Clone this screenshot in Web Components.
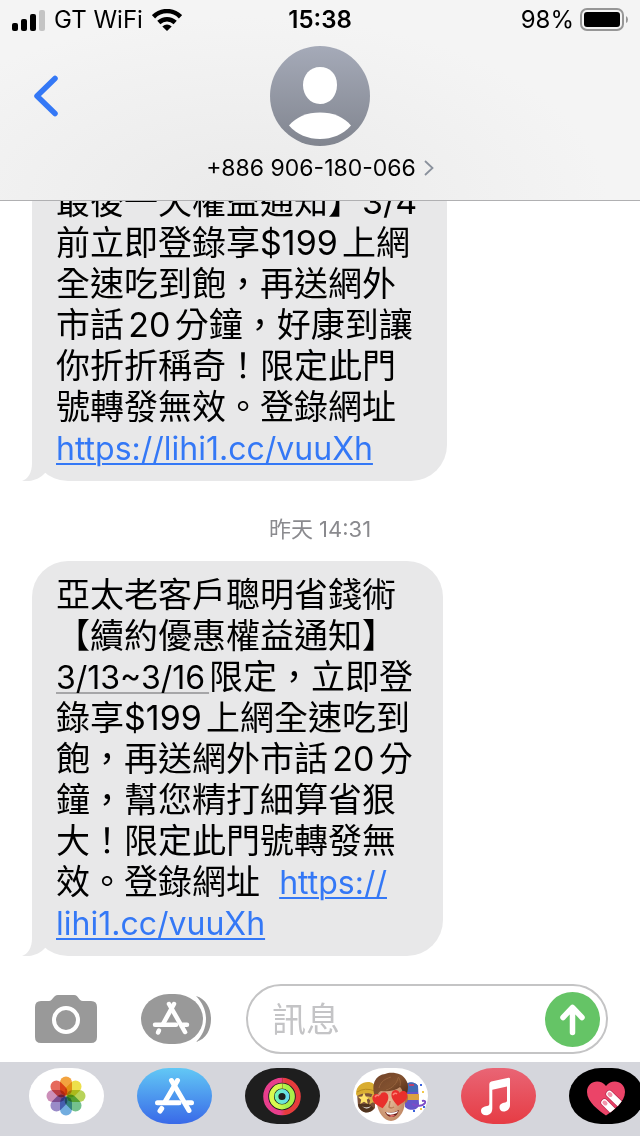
<!DOCTYPE html>
<html lang="zh-Hant">
<head>
<meta charset="utf-8">
<meta name="viewport" content="width=device-width, initial-scale=1">
<title>+886 906-180-066</title>
<style>
  html, body {
    margin: 0;
    height: 100%;
  }
  body {
    font-family: Inter, "Noto Sans CJK TC", sans-serif;
    color: #000;
    background: #fff;
  }
</style>
</head>
<body>
<message-app></message-app>

<script>
const define = (name, html) => {
  const template = document.createElement('template')
  template.innerHTML = html

  customElements.define(name, class extends HTMLElement {
    constructor() {
      super()
      this.attachShadow({ mode: 'open' })
      this.shadowRoot.appendChild(template.content.cloneNode(true))
    }
  })
}

define('status-bar', `
<style>
  :host {
    display: grid;
    grid-template-columns: 1fr auto 1fr;
    align-items: center;
    height: 40px;
    padding: 0 12px;
    font-size: 24px;
    line-height: 28px;
  }
  div {
    display: flex;
    align-items: center;
    gap: 9px;
  }
  .right {
    justify-content: flex-end;
    gap: 6px;
  }
  time { font-weight: 600; }
  svg { display: block; flex: none; }
</style>
<div>
  <svg width="33" height="21" viewBox="0 0 33 21" aria-hidden="true">
    <rect y="13" width="6" height="8" rx="2"/>
    <rect x="9" y="9" width="6" height="12" rx="2"/>
    <rect x="18" y="4" width="6" height="17" rx="2"/>
    <rect x="27" width="6" height="21" rx="2" fill="#c4c4c4"/>
  </svg>
  <span>GT WiFi</span>
  <svg width="30" height="22" viewBox="0 0 30 22" aria-hidden="true">
    <g fill="none" stroke="#000" stroke-width="4.500">
      <path d="M1.500 7.800C9 .2 21 .2 28.500 7.800"/>
      <path d="M6.800 13.500C11.500 9 18.500 9 23.200 13.500"/>
    </g>
    <path d="M15 22 10.300 17.500Q15 13.500 19.700 17.500Z"/>
  </svg>
</div>
<time>15:38</time>
<div class="right">
  <span>98%</span>
  <svg width="48" height="24" viewBox="0 0 48 24" aria-hidden="true">
    <rect x="1" y="1" width="42" height="21" rx="6" fill="none" stroke="#969696" stroke-width="2"/>
    <rect x="4" y="4" width="36" height="15" rx="3"/>
    <path d="M46 8q2 1 2 3.500t-2 3.500z" fill="#969696"/>
  </svg>
</div>
`)

define('chat-header', `
<style>
  :host {
    display: block;
    flex: none;
    background: radial-gradient(ellipse at 38% 100%, #eaeaea, #f4f4f4 65%);
    border-bottom: 1px solid #b0b0b2;
  }
  nav {
    display: grid;
    grid-template-columns: 1fr auto 1fr;
    padding: 6px 22px 18px;
  }
  button {
    padding: 0;
    border: 0;
    background: none;
    color: inherit;
    font: inherit;
  }
  svg { display: block; }
  .back {
    justify-self: start;
    align-self: start;
    padding: 28px 10px;
  }
  .contact {
    display: flex;
    flex-direction: column;
    align-items: center;
    gap: 8px;
  }
  .number {
    display: flex;
    align-items: center;
    gap: 8px;
    font-size: 23px;
    line-height: 28px;
  }
</style>
<status-bar></status-bar>
<nav>
  <button class="back" type="button" aria-label="返回">
    <svg width="28" height="44" viewBox="0 0 28 44">
      <path d="M23 4.500 5 22 23 39.500" fill="none" stroke="#3478f6" stroke-width="5.500" stroke-linecap="round" stroke-linejoin="round"/>
    </svg>
  </button>
  <button class="contact" type="button">
    <svg width="100" height="100" viewBox="0 0 100 100" aria-hidden="true">
      <linearGradient id="avatar" x2="0" y2="1">
        <stop stop-color="#a5aab8"/>
        <stop offset="1" stop-color="#81858f"/>
      </linearGradient>
      <circle cx="50" cy="50" r="50" fill="url(#avatar)"/>
      <path d="M50 21C60 21 67 28 67 39S60 58 50 58 33 49 33 39 40 21 50 21Z" fill="#fff"/>
      <path d="M19 79.500C26 71 37 66.500 50 66.500S74 71 81 79.500C73 88.500 62 93 50 93S27 88.500 19 79.500Z" fill="#fff"/>
    </svg>
    <span class="number">
      <span>+886 906-180-066</span>
      <svg width="10" height="16" viewBox="0 0 10 16" aria-hidden="true">
        <path d="M1 1 8.500 8 1 15" fill="none" stroke="#8a919c" stroke-width="1.800"/>
      </svg>
    </span>
  </button>
</nav>
`)

define('chat-bubble', `
<style>
  :host {
    display: block;
    position: relative;
    box-sizing: border-box;
    width: fit-content;
    padding: 13px 30px 13px 24px;
    border-radius: 36px;
    background: #e8e8e9;
    font-size: 34px;
    line-height: 41px;
    white-space: nowrap;
    text-autospace: normal;
    text-spacing-trim: space-all;
  }
  .tail {
    position: absolute;
    left: -10px;
    bottom: 0;
  }
  .text { position: relative; }
  /* shorter than the row, so a link never makes its row taller */
  ::slotted(a) {
    font-size: 32px;
    line-height: 32px;
    color: #3478f6;
    text-decoration-line: underline;
    text-decoration-thickness: 2px;
    text-underline-offset: 3px;
  }
  ::slotted(a.date) {
    color: inherit;
    text-decoration-color: #a6a6a8;
  }
</style>
<svg class="tail" width="34" height="40" viewBox="0 0 34 40" aria-hidden="true">
  <path d="M10 0V22C10 32 6 38 0 40 9 41 18 38 23 32L34 20V0Z" fill="#e8e8e9"/>
</svg>
<div class="text"><slot></slot></div>
`)

define('chat-time', `
<style>
  :host {
    display: block;
    padding: 33px 0 17px;
    text-align: center;
    font-size: 22px;
    line-height: 30px;
    color: #8a8a8e;
  }
</style>
<slot></slot>
`)

define('chat-thread', `
<style>
  :host {
    display: flex;
    flex-direction: column;
    justify-content: flex-end;
    flex: 1;
    min-height: 0;
    overflow: hidden;
    padding: 0 32px;
  }
</style>
<slot></slot>
`)

define('chat-compose', `
<style>
  :host {
    display: flex;
    align-items: center;
    flex: none;
    padding: 28px 32px 8px 35px;
  }
  button {
    flex: none;
    padding: 0;
    border: 0;
    background: none;
  }
  svg { display: block; }
  .camera { margin-right: 44px; }
  .apps { margin-right: 35px; }
  form {
    display: flex;
    align-items: center;
    flex: 1;
    min-width: 0;
    box-sizing: border-box;
    height: 70px;
    padding: 0 6px 0 24px;
    border: 2px solid #c4c4c5;
    border-radius: 35px;
  }
  input {
    flex: 1;
    min-width: 0;
    padding: 0;
    border: 0;
    outline: 0;
    background: none;
    font: inherit;
    font-size: 34px;
    line-height: 41px;
  }
  input::placeholder { color: #c4c4c6; }
</style>
<button class="camera" type="button" aria-label="相機">
  <svg width="62" height="48" viewBox="0 0 62 48">
    <path d="M6 6H14C18 6 18 0 23 0H39C44 0 43 6 48 6H56Q62 6 62 12V42Q62 48 56 48H6Q0 48 0 42V12Q0 6 6 6Z" fill="#999"/>
    <circle cx="31" cy="25" r="12" fill="none" stroke="#fff" stroke-width="4"/>
  </svg>
</button>
<button class="apps" type="button" aria-label="App">
  <svg width="70" height="50" viewBox="0 0 70 50">
    <path d="M55 2C65 5 70 14 70 25S65 45 55 48C61 42 65 34 65 25S61 8 55 2Z" fill="#999"/>
    <rect width="62" height="50" rx="28" ry="25" fill="#999"/>
    <g fill="none" stroke="#fff" stroke-width="4.500" stroke-linecap="round">
      <path d="M28 10 44 38"/>
      <path d="M33 10 22 30"/>
      <path d="M14 30.700H35M42 30.700H46M18 36.500 17 38.500"/>
    </g>
  </svg>
</button>
<form onsubmit="return false">
  <input type="text" name="message" placeholder="訊息" aria-label="訊息">
  <button type="submit" aria-label="傳送">
    <svg width="55" height="55" viewBox="0 0 55 55">
      <circle cx="27.500" cy="27.500" r="27.500" fill="#65c466"/>
      <path d="M27.500 40.500V16M18 25.500 27.500 15.500 37 25.500" fill="none" stroke="#fff" stroke-width="5.500" stroke-linecap="round" stroke-linejoin="round"/>
    </svg>
  </button>
</form>
`)

define('app-icon', `
<style>
  :host {
    display: block;
    flex: none;
  }
  button {
    display: block;
    width: 75px;
    height: 56px;
    padding: 0;
    border: 0;
    border-radius: 32px / 28px;
    overflow: hidden;
    background: var(--icon-bg, #fff);
  }
</style>
<button type="button"><slot></slot></button>
`)

define('app-strip', `
<style>
  :host {
    display: flex;
    flex: none;
    gap: 33px;
    padding: 6px 0 12px 29px;
    overflow: hidden;
    background: #d5d6dc;
  }
  svg { display: block; }
  .store { --icon-bg: linear-gradient(#62c8f5, #3969e8); }
  .rings { --icon-bg: #1e1e1e; }
  .music { --icon-bg: linear-gradient(#e96575, #e63c44); }
  .touch { --icon-bg: #000; }
  .petals { isolation: isolate; }
  .petals rect { mix-blend-mode: multiply; }
</style>
<app-icon>
  <svg width="75" height="56" viewBox="0 0 75 56" role="img" aria-label="照片">
    <g class="petals" transform="translate(37 28)">
      <rect x="-6" y="-19.500" width="12" height="19" rx="6" fill="#f3a33f"/>
      <rect x="-6" y="-19.500" width="12" height="19" rx="6" fill="#ede04b" transform="rotate(45)"/>
      <rect x="-6" y="-19.500" width="12" height="19" rx="6" fill="#b8d35a" transform="rotate(90)"/>
      <rect x="-6" y="-19.500" width="12" height="19" rx="6" fill="#74c18d" transform="rotate(135)"/>
      <rect x="-6" y="-19.500" width="12" height="19" rx="6" fill="#72addf" transform="rotate(180)"/>
      <rect x="-6" y="-19.500" width="12" height="19" rx="6" fill="#9a8bc8" transform="rotate(225)"/>
      <rect x="-6" y="-19.500" width="12" height="19" rx="6" fill="#cc8fb9" transform="rotate(270)"/>
      <rect x="-6" y="-19.500" width="12" height="19" rx="6" fill="#e66a5c" transform="rotate(315)"/>
    </g>
  </svg>
</app-icon>
<app-icon class="store">
  <svg width="75" height="56" viewBox="0 0 75 56" role="img" aria-label="App Store">
    <g fill="none" stroke="#fff" stroke-width="5" stroke-linecap="round">
      <path d="M34.500 12.500 52 42.500"/>
      <path d="M40.500 12.500 28.500 33"/>
      <path d="M20.500 34.700H42M50 34.700H54.500M24.700 40.500 23 43"/>
    </g>
  </svg>
</app-icon>
<app-icon class="rings">
  <svg width="75" height="56" viewBox="0 0 75 56" role="img" aria-label="健身">
    <linearGradient id="move">
      <stop offset=".45" stop-color="#e83e8c"/>
      <stop offset=".6" stop-color="#e63c3c"/>
    </linearGradient>
    <linearGradient id="exercise">
      <stop offset=".3" stop-color="#d9f94f"/>
      <stop offset=".7" stop-color="#a8f04a"/>
    </linearGradient>
    <linearGradient id="stand">
      <stop stop-color="#72f5b5"/>
      <stop offset="1" stop-color="#65dcf0"/>
    </linearGradient>
    <g fill="none">
      <circle cx="37" cy="28.500" r="16.300" stroke="url(#move)" stroke-width="5"/>
      <circle cx="37" cy="28.500" r="10.500" stroke="url(#exercise)" stroke-width="4.800"/>
      <circle cx="37" cy="28.500" r="5.500" stroke="url(#stand)" stroke-width="3.800"/>
      <path d="M37.500 9.700V14.500M37.500 15.500V20.500" stroke="#8c2a1c" stroke-width="1" opacity=".4"/>
    </g>
  </svg>
</app-icon>
<app-icon>
  <svg width="75" height="56" viewBox="0 0 75 56" role="img" aria-label="Memoji">
    <defs>
      <radialGradient id="skin" cx=".45" cy=".5" r=".6">
        <stop stop-color="#e8bb99"/>
        <stop offset="1" stop-color="#bd8460"/>
      </radialGradient>
      <linearGradient id="hair" x2="1" y2="1">
        <stop stop-color="#6f4228"/>
        <stop offset=".5" stop-color="#82512f"/>
        <stop offset="1" stop-color="#4b2715"/>
      </linearGradient>
      <path id="heart" d="M0 8C-3 5-8 2-8-3-8-8-2-9 0-5 2-9 8-8 8-3 8 2 3 5 0 8Z"/>
      <path id="star" d="M0-6 1.800-2 6-1.700 2.800 1.200 3.800 5.500 0 3.200-3.800 5.500-2.800 1.200-6-1.700-1.800-2Z"/>
    </defs>
    <path d="M4 25H22V40C18 46 8 46 5 38Z" fill="#7d533a"/>
    <path d="M5 36C7 46 17 47 21 40L16 36Z" fill="#50341f"/>
    <path d="M3 26C3 18 9 14 15 14 19 14 22 16 22 20V27C15 24 9 25 4 28Z" fill="#d9ad31"/>
    <path d="M4 24Q12 19 22 23" stroke="#b88b20" fill="none"/>
    <use href="#star" x="11" y="30.500" fill="#ffe36a"/>
    <use href="#star" x="20" y="31" fill="#d8b346"/>
    <path d="M9 38Q13 41 18 38Q14 43 9 38Z" fill="#fff"/>
    <path d="M52 17C55 13 63 14 65 18L66 36C66 42 57 44 52 39Z" fill="#6554c9"/>
    <path d="M52 18C54 13 62 13 65 18V24H52Z" fill="#416ab5"/>
    <path d="M52 26H66V32H52Z" fill="#dca13e"/>
    <path d="M56 17H61" stroke="#bd416c" stroke-width="2"/>
    <path d="M59 36Q68 40 72 35Q73 32 69 33" fill="none" stroke="#7c4cc6" stroke-width="2"/>
    <path d="M67 16h2v2h-2zM70 38h2v2h-2zM60 42h2v2h-2z" fill="#3c63dd"/>
    <path d="M69 23h2v2h-2zM67 40h2v2h-2z" fill="#f2c84b"/>
    <ellipse cx="23.500" cy="31" rx="3" ry="5" fill="#b97b54"/>
    <ellipse cx="52" cy="30" rx="3" ry="5" fill="#ad704b"/>
    <path d="M23 20C24 9 50 8 52 23V35C51 45 45 52.500 38 53 31 53 25 44 24 36Z" fill="url(#skin)"/>
    <path d="M22 29C17 13 25 7 32 6 38 3 50 5 53 12 57 18 54 25 53 29 50 27 50 22 47 19 42 23 35 24 28 23 25 24 25 28 22 29Z" fill="url(#hair)"/>
    <path d="M26 20C28 13 32 11 38 9M33 22C40 20 44 15 45 10M47 18C48 14 47 11 45 9" fill="none" stroke="#b07a4d" stroke-width="1" opacity=".5"/>
    <path d="M37 33 36 39Q38 41 41 39" fill="none" stroke="#b87c56" stroke-width="1.500"/>
    <use href="#heart" transform="translate(28 32.500) rotate(-12)" fill="#e92f2c"/>
    <use href="#heart" transform="translate(46 30) rotate(8)" fill="#e92f2c"/>
    <path d="M22 29Q24 26 26 28M40 27Q42 24 44 26" fill="none" stroke="#ff8276" stroke-width="1.500"/>
    <path d="M32 44Q39 46 46 42Q44 49 39 49Q34 49 32 44Z" fill="#6b1d18"/>
    <path d="M33 44Q39 46 45 43L44 45Q38 48 34 46Z" fill="#fff"/>
    <path d="M36 48Q40 46 42 47.500Q39 50 36 48Z" fill="#dc6965"/>
  </svg>
</app-icon>
<app-icon class="music">
  <svg width="75" height="56" viewBox="0 0 75 56" role="img" aria-label="音樂">
    <path d="M28.300 16Q28.300 14 30.300 13.500L47.500 9.700Q49 9.500 49 11V37C49 41 46 43.500 42.500 43.500 40 43.500 38.500 41.800 38.500 39.500 38.500 36 41 35 44 34.500 45.500 34.200 46 33.700 46 32.500V18.500L31.300 21.700V40.500C31.300 45 28.500 47.300 25 47.300 22 47.300 20 45.500 20 43 20 39.500 23 38.700 26 38 27.800 37.600 28.300 37 28.300 35.500Z" fill="#fff"/>
  </svg>
</app-icon>
<app-icon class="touch">
  <svg width="75" height="56" viewBox="0 0 75 56" role="img" aria-label="Digital Touch">
    <clipPath id="love">
      <path d="M37 47.500C30 42.500 18 34 18 24 18 13 31 10 37 18 43 10 56 13 56 24 56 34 44 42.500 37 47.500Z"/>
    </clipPath>
    <g clip-path="url(#love)">
      <rect width="75" height="56" fill="#eb4468"/>
      <g fill="none" stroke-linecap="round">
        <path d="M40.500 26 56 41M35.500 34.500 50 49" stroke="#b92c50" stroke-width="8"/>
        <path d="M40.500 26 56 41M35.500 34.500 50 49" stroke="#fff" stroke-width="6.500"/>
        <path d="M40.500 26 41.500 27M35.500 34.500 36.500 35.500" stroke="#f495ac" stroke-width="4"/>
      </g>
    </g>
  </svg>
</app-icon>
`)

define('message-app', `
<style>
  :host {
    display: flex;
    flex-direction: column;
    height: 100vh;
    overflow: hidden;
  }
</style>
<chat-header></chat-header>
<chat-thread>
  <chat-bubble>最後一天權益通知】3/4<br>前立即登錄享$199上網<br>全速吃到飽，再送網外<br>市話20分鐘，好康到讓<br>你折折稱奇！限定此門<br>號轉發無效。登錄網址<br><a href="https://lihi1.cc/vuuXh">https://lihi1.cc/vuuXh</a></chat-bubble>
  <chat-time>昨天 14:31</chat-time>
  <chat-bubble>亞太老客戶聰明省錢術<br>【續約優惠權益通知】<br><a class="date" href="#date">3/13~3/16</a>限定，立即登<br>錄享$199上網全速吃到<br>飽，再送網外市話20分<br>鐘，幫您精打細算省狠<br>大！限定此門號轉發無<br>效。登錄網址&nbsp; <a href="https://lihi1.cc/vuuXh">https://<br>lihi1.cc/vuuXh</a></chat-bubble>
</chat-thread>
<chat-compose></chat-compose>
<app-strip></app-strip>
`)
</script>
</body>
</html>
